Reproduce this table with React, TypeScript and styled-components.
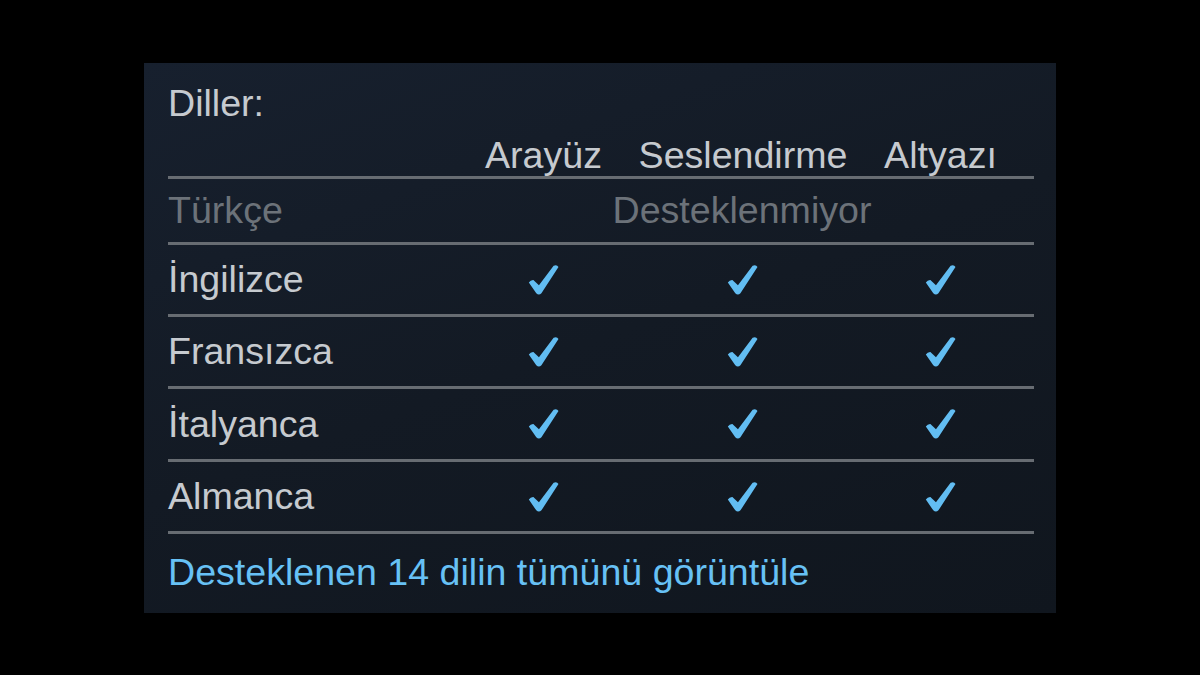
import React from "react";
import styled, { createGlobalStyle } from "styled-components";

const GlobalStyle = createGlobalStyle`
  html, body {
    margin: 0;
    padding: 0;
    background: #000000;
  }
`;

const Page = styled.div`
  display: flex;
  align-items: center;
  justify-content: center;
  width: 100vw;
  height: 100vh;
  background: #000000;
  font-family: "Liberation Sans", Arial, sans-serif;
`;

const Panel = styled.div`
  box-sizing: border-box;
  width: 912px;
  height: 550px;
  padding: 19px 22px 0 24px;
  background: linear-gradient(160deg, #17202e 0%, #131a24 50%, #10161e 100%);
`;

const Title = styled.div`
  font-size: 37.6px;
  line-height: 42px;
  color: #c6cacf;
`;

const Table = styled.div`
  display: grid;
  grid-template-columns: 276px 199px 198px 1fr;
`;

const HeaderCell = styled.div<{ $shift?: number }>`
  height: 52px;
  display: flex;
  align-items: flex-end;
  justify-content: center;
  padding-left: ${(p) => p.$shift || 0}px;
  font-size: 37.6px;
  line-height: 42px;
  color: #c6cacf;
  white-space: nowrap;
  border-bottom: 3px solid #676c72;
`;

const Cell = styled.div<{ $height: number; $shift?: number; $span?: number }>`
  height: ${(p) => p.$height}px;
  display: flex;
  align-items: center;
  justify-content: center;
  padding-left: ${(p) => p.$shift || 0}px;
  grid-column: ${(p) => (p.$span ? `span ${p.$span}` : "auto")};
  border-bottom: 3px solid #676c72;
  font-size: 37.6px;
  line-height: ${(p) => p.$height}px;
  color: #6c7279;
`;

const LabelCell = styled.div<{ $height: number; $muted?: boolean }>`
  height: ${(p) => p.$height}px;
  display: flex;
  align-items: center;
  border-bottom: 3px solid #676c72;
  font-size: 37.6px;
  line-height: ${(p) => p.$height}px;
  color: ${(p) => (p.$muted ? "#6c7279" : "#c6cacf")};
`;

const Link = styled.a`
  display: block;
  margin-top: 17px;
  font-size: 37.6px;
  line-height: 42px;
  color: #67c1f5;
  text-decoration: none;
  cursor: pointer;
`;

const Check = () => (
  <svg width="31" height="31" viewBox="0 0 30 30">
    <path
      d="M0.8 18 Q2.5 15.2 5.2 15.4 L10.6 20.6 L24.8 1.6 Q28 0.2 29.5 2.8 L13 28.4 Q10.5 30.8 8 28.4 Z"
      fill="#62bdf2"
    />
  </svg>
);

const languages = [
  { name: "İngilizce", height: 69 },
  { name: "Fransızca", height: 69 },
  { name: "İtalyanca", height: 70 },
  { name: "Almanca", height: 69 },
];

export default function App() {
  return (
    <Page>
      <GlobalStyle />
      <Panel>
        <Title>Diller:</Title>
        <Table>
          <HeaderCell />
          <HeaderCell>Arayüz</HeaderCell>
          <HeaderCell $shift={2}>Seslendirme</HeaderCell>
          <HeaderCell $shift={6}>Altyazı</HeaderCell>

          <LabelCell $height={63} $muted>
            Türkçe
          </LabelCell>
          <Cell $height={63} $span={3} $shift={6}>
            Desteklenmiyor
          </Cell>

          {languages.map((lang) => (
            <React.Fragment key={lang.name}>
              <LabelCell $height={lang.height}>{lang.name}</LabelCell>
              <Cell $height={lang.height}>
                <Check />
              </Cell>
              <Cell $height={lang.height}>
                <Check />
              </Cell>
              <Cell $height={lang.height} $shift={6}>
                <Check />
              </Cell>
            </React.Fragment>
          ))}
        </Table>
        <Link>Desteklenen 14 dilin tümünü görüntüle</Link>
      </Panel>
    </Page>
  );
}
